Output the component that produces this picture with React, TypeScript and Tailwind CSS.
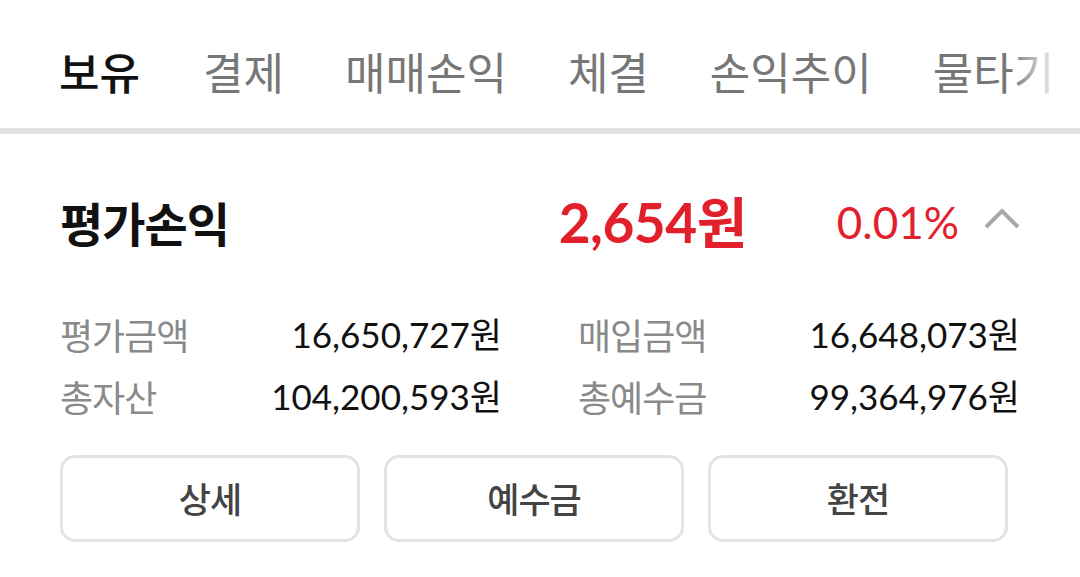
const tabs = ['보유', '결제', '매매손익', '체결', '손익추이', '물타기']

const details = [
  { label: '평가금액', value: '16,650,727원' },
  { label: '매입금액', value: '16,648,073원' },
  { label: '총자산', value: '104,200,593원' },
  { label: '총예수금', value: '99,364,976원' },
]

export default function App() {
  return (
    <div className="h-[577px] w-[1080px] overflow-hidden bg-white [font-family:Lato,'Noto_Sans_CJK_KR',sans-serif]">
      {/* tabs */}
      <div className="relative overflow-hidden border-b-[6px] border-[#e3e3e3]">
        <div className="flex gap-[61px] whitespace-nowrap pl-[59px] [font-family:'Noto_Sans_CJK_KR',sans-serif]">
          {tabs.map((t, i) => (
            <div key={t} className="-mb-[6px] flex shrink-0 flex-col">
              <div
                className={
                  i === 0
                    ? 'pt-[49px] pb-[35px] text-[44px] leading-[44px] font-medium text-[#111]'
                    : 'pt-[49px] pb-[35px] text-[44px] leading-[44px] text-[#777]'
                }
              >
                {t}
              </div>
              <div className={i === 0 ? 'ml-[1px] h-[6px] w-[82px] bg-[#111]' : 'h-[6px]'} />
            </div>
          ))}
        </div>
        <div className="pointer-events-none absolute top-0 right-0 h-full w-[70px] bg-gradient-to-l from-white via-white/70 to-transparent" />
      </div>

      <div className="px-[60px]">
        {/* summary */}
        <div className="mt-[43px] flex h-[90px] items-center">
          <div className="flex-1 text-[47px] font-bold tracking-[-1px] text-[#111] [font-family:'Noto_Sans_CJK_KR',sans-serif]">
            평가손익
          </div>
          <div className="text-[55px] leading-none font-bold tracking-[-0.5px] text-[#e2202c]">2,654원</div>
          <div className="ml-[90px] text-[44px] leading-none text-[#e2202c]">0.01%</div>
          <svg className="mt-[-8px] ml-[25px]" width="36" height="22" viewBox="0 0 36 22" fill="none">
            <path d="M2 20 L18 4 L34 20" stroke="#a9a9a9" strokeWidth="4" />
          </svg>
        </div>

        {/* details */}
        <div className="mt-[36px] grid w-[960px] grid-cols-2 gap-x-[76px]">
          {details.map((d) => (
            <div key={d.label} className="flex h-[62px] items-center justify-between">
              <span className="text-[36px] tracking-[-1px] text-[#8a8a8a] [font-family:'Noto_Sans_CJK_KR',sans-serif]">
                {d.label}
              </span>
              <span className="text-[35px] text-[#111]">{d.value}</span>
            </div>
          ))}
        </div>

        {/* buttons */}
        <div className="mt-[28px] flex w-[948px] gap-[24px]">
          {['상세', '예수금', '환전'].map((b) => (
            <button
              key={b}
              className="flex h-[87px] flex-1 items-center justify-center rounded-[15px] border-[3px] border-[#e3e3e3] bg-white text-[35px] font-medium tracking-[-1px] text-[#444] [font-family:'Noto_Sans_CJK_KR',sans-serif]"
            >
              {b}
            </button>
          ))}
        </div>
      </div>
    </div>
  )
}
